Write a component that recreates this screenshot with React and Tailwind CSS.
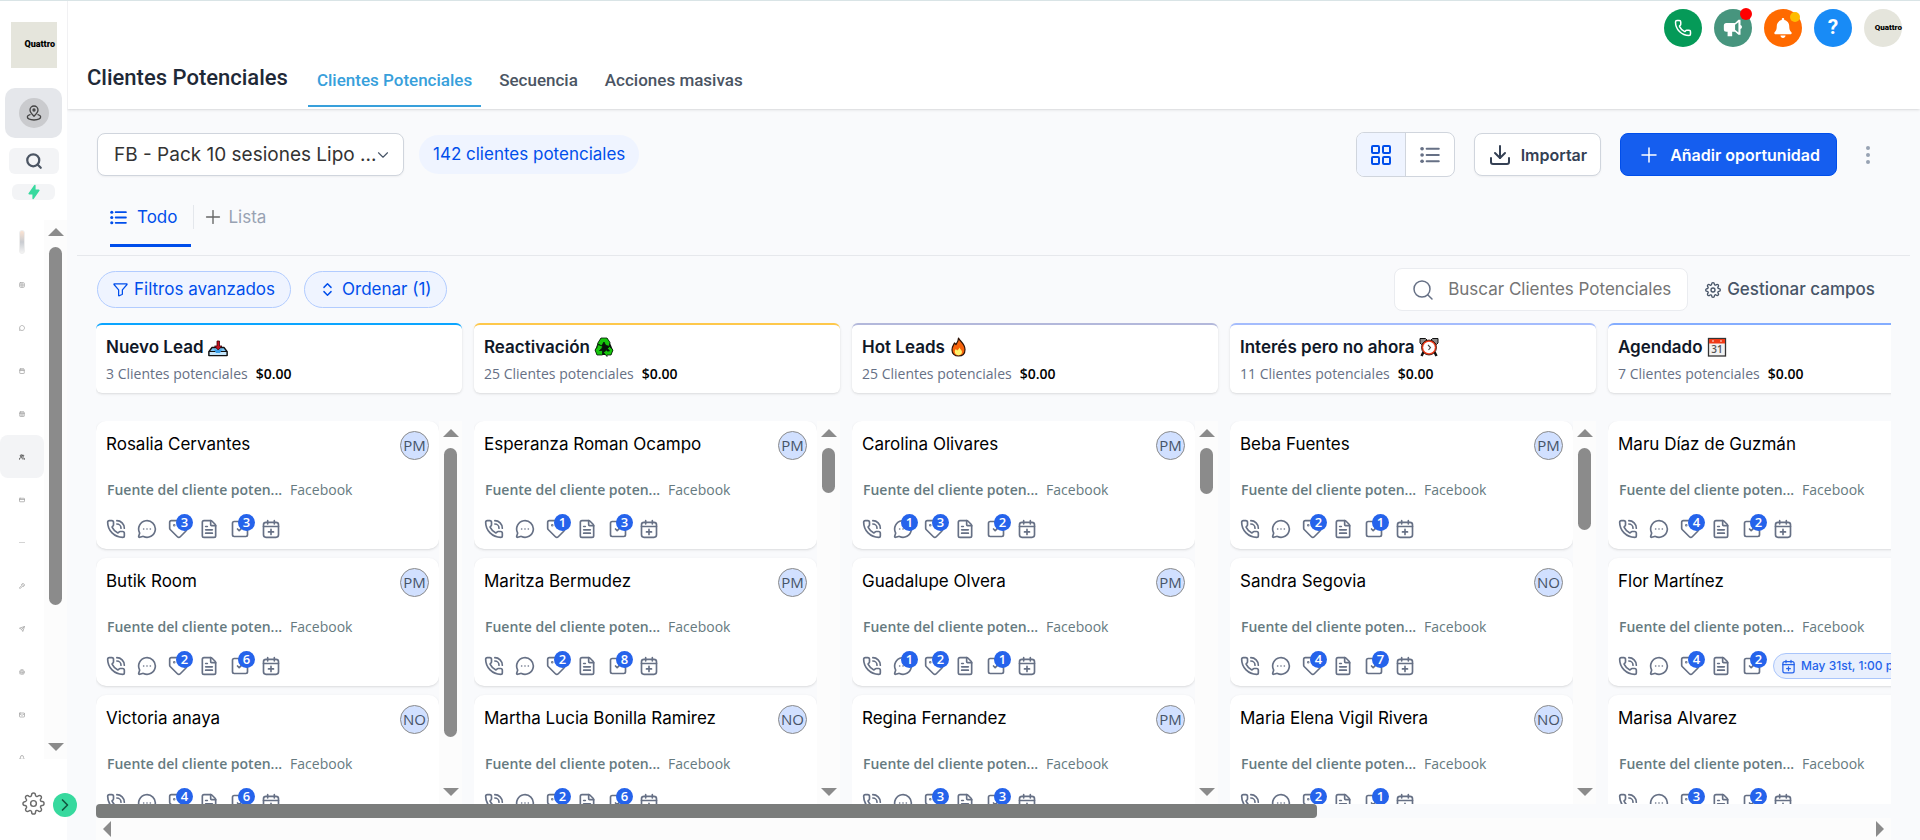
import React, { useState } from 'react'
import {
  Bell,
  Calendar,
  CalendarDays,
  ChevronDown,
  ChevronRight,
  ChevronsUpDown,
  CreditCard,
  Download,
  FileText,
  Fingerprint,
  Grid2x2,
  LayoutGrid,
  Mail,
  MessageCircle,
  MessageCircleMore,
  PhoneCall,
  Phone,
  Plus,
  Search,
  Send,
  SquareCheck,
  Tag,
  Users,
  Wrench,
} from 'lucide-react'
import { FiSettings } from 'react-icons/fi'
import { HiLightningBolt } from 'react-icons/hi'
import { FaBell } from 'react-icons/fa'

const columns = [
  {
    name: 'Nuevo Lead',
    emoji: 'inbox',
    count: 3,
    border: 'border-[#0ba5ff]',
    thumb: 'h-[289px]',
    cards: [
      { name: 'Rosalia Cervantes', owner: 'PM', tags: 3, tasks: 3 },
      { name: 'Butik Room', owner: 'PM', tags: 2, tasks: 6 },
      { name: 'Victoria anaya', owner: 'NO', tags: 4, tasks: 6 },
    ],
  },
  {
    name: 'Reactivación',
    emoji: 'recycle',
    count: 25,
    border: 'border-[#fec84b]',
    thumb: 'h-[45px]',
    cards: [
      { name: 'Esperanza Roman Ocampo', owner: 'PM', tags: 1, tasks: 3 },
      { name: 'Maritza Bermudez', owner: 'PM', tags: 2, tasks: 8 },
      { name: 'Martha Lucia Bonilla Ramirez', owner: 'NO', tags: 2, tasks: 6 },
    ],
  },
  {
    name: 'Hot Leads',
    emoji: 'fire',
    count: 25,
    border: 'border-[#b3b8db]',
    thumb: 'h-[46px]',
    cards: [
      { name: 'Carolina Olivares', owner: 'PM', chats: 1, tags: 3, tasks: 2 },
      { name: 'Guadalupe Olvera', owner: 'PM', chats: 1, tags: 2, tasks: 1 },
      { name: 'Regina Fernandez', owner: 'PM', tags: 3, tasks: 3 },
    ],
  },
  {
    name: 'Interés pero no ahora',
    emoji: 'clock',
    count: 11,
    border: 'border-[#a4bcfd]',
    thumb: 'h-[82px]',
    cards: [
      { name: 'Beba Fuentes', owner: 'PM', tags: 2, tasks: 1 },
      { name: 'Sandra Segovia', owner: 'NO', tags: 4, tasks: 7 },
      { name: 'Maria Elena Vigil Rivera', owner: 'NO', tags: 2, tasks: 1 },
    ],
  },
  {
    name: 'Agendado',
    emoji: 'calendar',
    count: 7,
    border: 'border-[#84adff]',
    thumb: 'h-[120px]',
    cards: [
      { name: 'Maru Díaz de Guzmán', tags: 4, tasks: 2 },
      { name: 'Flor Martínez', tags: 4, tasks: 2, date: 'May 31st, 1:00 pm' },
      { name: 'Marisa Alvarez', tags: 3, tasks: 2 },
    ],
  },
]

const menu = [
  { label: 'Panel', icon: Grid2x2 },
  { label: 'Conversaciones', icon: MessageCircle },
  { label: 'Calendarios', icon: Calendar },
  { label: 'Contactos', icon: CalendarDays },
  { label: 'Oportunidades', icon: Users, active: true },
  { label: 'Pagos', icon: CreditCard },
  { label: 'Separador', divider: true },
  { label: 'Automatización', icon: Wrench },
  { label: 'Marketing', icon: Send },
  { label: 'Sitios', icon: Fingerprint },
  { label: 'Membresías', icon: Mail },
  { label: 'Reputación', icon: Bell },
]

function CalendarPlusIcon({ className }) {
  return (
    <svg viewBox="0 0 24 24" className={className} fill="none" stroke="currentColor" strokeWidth="2" strokeLinecap="round" strokeLinejoin="round">
      <rect x="3" y="4" width="18" height="18" rx="3" />
      <path d="M3 9h18M8 2v4M16 2v4M12 12.500v6M9 15.500h6" />
    </svg>
  )
}

function FunnelIcon({ className }) {
  return (
    <svg viewBox="0 0 24 24" className={className} fill="none" stroke="currentColor" strokeWidth="2" strokeLinecap="round" strokeLinejoin="round">
      <path d="M2 3h20c.6 0 .7.5.4 1L15 12.500v6.500c0 .5-.2.800-.6 1L10 22c-.600.300-1 0-1-.600V12.500L1.600 4c-.3-.5-.2-1 .4-1Z" />
    </svg>
  )
}

function ListIcon({ className }) {
  return (
    <svg viewBox="0 0 24 24" className={className} fill="none" stroke="currentColor" strokeWidth="2.500" strokeLinecap="round">
      <path d="M8 4.500h14.500M8 12h14.500M8 19.500h14.500" />
      <g fill="currentColor" stroke="none">
        <circle cx="2.500" cy="4.500" r="2.200" />
        <circle cx="2.500" cy="12" r="2.200" />
        <circle cx="2.500" cy="19.500" r="2.200" />
      </g>
    </svg>
  )
}

function LocationIcon({ className }) {
  return (
    <svg viewBox="0 0 24 24" className={className} fill="none" stroke="currentColor" strokeWidth="2" strokeLinecap="round" strokeLinejoin="round">
      <path d="M12 17c3.500-3.500 6-6 6-9.500a6 6 0 0 0-12 0c0 3.500 2.500 6 6 9.500Z" />
      <circle cx="12" cy="7.500" r="1.500" />
      <path d="M6 14.500c-2.500.700-4 1.800-4 3.300C2 20.500 6 22.500 12 22.500s10-2 10-4.700c0-1.500-1.500-2.600-4-3.300" />
    </svg>
  )
}

function Emoji({ name }) {
  if (name === 'inbox') {
    return (
      <svg viewBox="0 0 20 20" className="h-5 w-5" role="img" aria-label="Bandeja">
        <path d="M4 10.500h12l3 4v4H1v-4z" fill="#7cc3f2" stroke="#111" strokeWidth="1.300" strokeLinejoin="round" />
        <path d="M1 14.500h18v4H1z" fill="#c3e5fb" stroke="#111" strokeWidth="1.200" strokeLinejoin="round" />
        <path d="M6 12.500h8l-2 3.500H8z" fill="#3b9fe8" />
        <path d="M9 4h2.500v5H14l-3.800 4L6.500 9H9z" fill="#c50f1f" stroke="#3c0508" strokeWidth=".8" />
      </svg>
    )
  }
  if (name === 'recycle') {
    return (
      <svg viewBox="0 0 20 20" className="h-5 w-5" role="img" aria-label="Reciclar">
        <path d="M7 1h6l3 5 3 7-2 5H3l-2-5 3-7z" fill="#07140a" />
        <g fill="#16c60c" stroke="#07140a" strokeWidth=".8" strokeLinejoin="round">
          <path d="M7 1h6l3 4.500-1 4-3.500-1.500-1.500-3L7.500 9 3.500 6.500z" />
          <path d="M3.500 7.500 8.500 9l-.5 2.500-2.500 2H8.500v4.500H3L1 13l2-2.500z" />
          <path d="m15.500 9.500 3.500 3.500-2 5H13v1.500L9.500 15.500l3.500-3V14h2.500l-2-2.500z" />
        </g>
      </svg>
    )
  }
  if (name === 'fire') {
    return (
      <svg viewBox="0 0 20 20" className="h-5 w-5" role="img" aria-label="Fuego">
        <path d="M9.500 1c1 3 6.500 5.500 6.500 11.500 0 4-2.500 6.500-6.500 6.500S3 16.500 3 13c0-3.500 1.500-5 2.500-7L7 7.500C8 6 9.500 4 9.500 1Z" fill="#f7630c" stroke="#2b1205" strokeWidth="1.200" strokeLinejoin="round" />
        <path d="M10.500 10.500c.5 2 2.500 2.500 2.500 4.500s-1.500 3.200-3.500 3.200S5.800 17 5.800 15c0-1.500.4-2 1-3L8.200 13.500c1-1 1.800-1.500 2.300-3Z" fill="#fff26b" />
      </svg>
    )
  }
  if (name === 'clock') {
    return (
      <svg viewBox="0 0 20 20" className="h-5 w-5" role="img" aria-label="Despertador">
        <path d="m4.500 15-2 4M15.500 15l2 4" stroke="#111" strokeWidth="2.500" />
        <path d="M1 6V1.500h5.500L8 3 2.500 7.500zM19 6V1.500h-5.500L12 3l5.500 4.500z" fill="#8c8c8c" stroke="#111" strokeWidth="1" />
        <circle cx="10" cy="10.500" r="7.500" fill="#f03a17" stroke="#2b0b05" strokeWidth=".8" />
        <circle cx="10" cy="10.500" r="5.800" fill="#fff" />
        <path d="m9 8 2.500 2.500L9.500 13" fill="none" stroke="#444" strokeWidth="1.100" />
      </svg>
    )
  }
  return (
    <svg viewBox="0 0 20 20" className="h-5 w-5" role="img" aria-label="Calendario">
      <rect x="1.500" y="1.500" width="17" height="17.500" fill="#f2f2f2" stroke="#333" strokeWidth="1.300" />
      <path d="M2 2h16v4.500H2z" fill="#f03a17" />
      <circle cx="6" cy="4" r=".8" fill="#fff" />
      <circle cx="14" cy="4" r=".8" fill="#fff" />
      <text x="10" y="16" textAnchor="middle" fontSize="10" fill="#555" fontFamily="Open Sans, sans-serif">31</text>
    </svg>
  )
}

function Arrow({ dir }) {
  const points = {
    up: '0,8 8,0 16,8',
    down: '0,0 16,0 8,8',
    left: '8,0 8,16 0,8',
    right: '0,0 8,8 0,16',
  }
  const upright = dir === 'up' || dir === 'down'
  return (
    <svg viewBox={upright ? '0 0 16 8' : '0 0 8 16'} className={upright ? 'h-2 w-4 shrink-0' : 'h-4 w-2 shrink-0'} fill="#8b8b8b">
      <polygon points={points[dir]} />
    </svg>
  )
}

function VerticalScroll({ thumb }) {
  return (
    <div className="flex w-[23px] shrink-0 flex-col items-center bg-[#fcfcfc] py-2">
      <Arrow dir="up" />
      <div className={'mt-[11px] w-[13px] rounded-full bg-[#8b8b8b] ' + thumb} />
      <div className="mt-auto flex">
        <Arrow dir="down" />
      </div>
    </div>
  )
}

function IconAction({ label, count, children }) {
  return (
    <button aria-label={label} className="relative h-5 w-5 shrink-0">
      {children}
      {count && (
        <span className="absolute -top-[5px] left-2 flex h-[17px] w-[17px] items-center justify-center rounded-full bg-[#2563eb] font-['Open_Sans',sans-serif] text-[13px] leading-[17px] font-semibold text-white">
          {count}
        </span>
      )}
    </button>
  )
}

function Card({ card }) {
  return (
    <article className="shrink-0 rounded-[10px] bg-white p-[10px] shadow-sm">
      <div className="flex h-[29px] items-start justify-between">
        <a href="#" className="text-[17px] leading-[27px] text-black">{card.name}</a>
        {card.owner && (
          <span className="flex h-[29px] w-[29px] items-center justify-center rounded-full border border-[#8b8b8b] bg-[#d1e0ff] font-['Open_Sans',sans-serif] text-[15px] text-[#475467]">
            {card.owner}
          </span>
        )}
      </div>
      <div className="mt-5 flex gap-2 px-px font-['Open_Sans',sans-serif] text-[14px] leading-5 text-[#667a80]">
        <span className="font-semibold">Fuente del cliente poten...</span>
        <span>Facebook</span>
      </div>
      <div className="mt-[19px] flex h-5 items-center gap-[11px] text-[#667085]">
        <IconAction label="Llamar"><PhoneCall className="h-5 w-5" /></IconAction>
        <IconAction label="Mensajes" count={card.chats}><MessageCircleMore className="h-5 w-5" /></IconAction>
        <IconAction label="Etiquetas" count={card.tags}><Tag className="h-5 w-5" /></IconAction>
        <IconAction label="Notas"><FileText className="h-5 w-5" /></IconAction>
        <IconAction label="Tareas" count={card.tasks}><SquareCheck className="h-5 w-5" /></IconAction>
        {card.date ? (
          <button className="flex h-[26px] shrink-0 items-center gap-[5px] rounded-full border border-[#a9c5fb] bg-[#e8effd] px-[7px] text-[12px] font-medium whitespace-nowrap text-[#2563eb]">
            <CalendarPlusIcon className="h-[15px] w-[15px]" />
            {card.date}
          </button>
        ) : (
          <IconAction label="Cita"><CalendarPlusIcon className="h-5 w-5" /></IconAction>
        )}
      </div>
    </article>
  )
}

function Column({ column }) {
  return (
    <section className="flex w-[366px] shrink-0 flex-col">
      <header className={'h-[70px] shrink-0 rounded-md border-t-2 bg-white px-[10px] pt-[10px] shadow-sm ' + column.border}>
        <h2 className="flex items-center gap-1 text-[17px] leading-6 font-semibold text-[#101828]">
          {column.name} <Emoji name={column.emoji} />
        </h2>
        <p className="mt-[5px] flex gap-2 font-['Open_Sans',sans-serif] text-[14px] leading-5 text-[#667085]">
          {column.count} Clientes potenciales
          <span className="font-semibold text-black">$0.00</span>
        </p>
      </header>
      <div className="mt-7 flex min-h-0 flex-1 overflow-hidden">
        <div className="flex flex-1 flex-col gap-[9px] overflow-hidden">
          {column.cards.map((card) => <Card key={card.name} card={card} />)}
        </div>
        <VerticalScroll thumb={column.thumb} />
      </div>
    </section>
  )
}

function Sidebar() {
  return (
    <aside className="relative z-10 flex w-[67px] shrink-0 flex-col bg-white">
      <div className="mt-[21px] ml-[11px] flex h-[46px] w-[46px] shrink-0 items-center justify-end bg-[#e5e5dc] pr-[2px] font-[Roboto,sans-serif] text-[9px] font-black text-black">
        Quattro
      </div>
      <button aria-label="Ubicación" className="mt-5 ml-[5px] flex h-[50px] w-[57px] shrink-0 items-center justify-center rounded-[10px] bg-[#e5e7eb]">
        <span className="flex h-[30px] w-[30px] items-center justify-center rounded-full bg-[#cacbce]">
          <LocationIcon className="h-4 w-4 text-[#444]" />
        </span>
      </button>
      <button aria-label="Buscar" className="mt-[10px] ml-[9px] flex h-[26px] w-[50px] shrink-0 items-center justify-center rounded-md bg-[#f3f4f6]">
        <Search strokeWidth={3} className="h-[18px] w-[18px] text-[#4b5563]" />
      </button>
      <button aria-label="Acciones rápidas" className="mt-[10px] ml-3 flex h-4 w-[43px] shrink-0 items-center justify-center rounded-md bg-[#f3f4f6]">
        <HiLightningBolt className="h-4 w-4 text-[#37d99e]" />
      </button>
      <div className="mt-5 flex min-h-0 flex-1">
        <nav className="flex w-[44px] flex-col overflow-hidden">
          <a href="#" aria-label="Inicio" className="flex h-[43px] shrink-0 items-center justify-center">
            <span className="h-6 w-[6px] rounded-full border border-[#eee] bg-linear-to-b from-[#fbe3d2] via-[#c9ccd1] to-[#f4f4f4]" />
          </a>
          {menu.map((item) => (
            <a
              key={item.label}
              href="#"
              aria-label={item.label}
              className={'flex h-[43px] shrink-0 items-center justify-center ' + (item.active ? 'rounded-lg bg-[#f3f4f6] text-[#333]' : 'text-[#a3a3a3]')}
            >
              {item.divider ? <span className="h-px w-[6px] bg-[#d4d4d4]" /> : <item.icon strokeWidth={3} className="h-[6px] w-[6px]" />}
            </a>
          ))}
        </nav>
        <VerticalScroll thumb="h-[358px]" />
      </div>
      <div className="flex h-[81px] shrink-0 items-center justify-center pt-[7px]">
        <button aria-label="Configuración"><FiSettings strokeWidth={1.5} className="h-[23px] w-[23px] text-[#6b6b6b]" /></button>
      </div>
      <button aria-label="Expandir" className="absolute -right-[10px] bottom-[23px] flex h-6 w-6 items-center justify-center rounded-full bg-[#37d99e]">
        <ChevronRight className="h-5 w-5 text-[#125740]" />
      </button>
    </aside>
  )
}

function TopBar({ tab, setTab }) {
  return (
    <header className="z-[5] flex h-[108px] shrink-0 flex-col border-l border-[#f1f1f3] bg-white shadow">
      <div className="flex justify-end gap-3 pt-2 pr-[18px] text-white">
        <button aria-label="Teléfono" className="flex h-[38px] w-[38px] items-center justify-center rounded-full bg-[#059a58]">
          <Phone strokeWidth={2} className="h-[18px] w-[18px]" />
        </button>
        <button aria-label="Novedades" className="relative flex h-[38px] w-[38px] items-center justify-center rounded-full bg-[#47957e]">
          <svg viewBox="0 0 24 24" className="h-5 w-5" fill="currentColor">
            <path fillRule="evenodd" d="M21 2v6.500a2.500 2.500 0 0 1 0 4.800V20h-2.500l-4-3.500H11V22H5.500v-5.500H4a3 3 0 0 1-3-3V9a3 3 0 0 1 3-3h10.500L18.500 2ZM18.500 5l-4 3v6.200l4 3.200Z" />
          </svg>
          <span className="absolute -top-px right-0 h-3 w-3 rounded-full bg-[#ff0000]" />
        </button>
        <button aria-label="Notificaciones" className="relative flex h-[38px] w-[38px] items-center justify-center rounded-full bg-[#ff6a00]">
          <FaBell className="h-5 w-5" />
          <span className="absolute top-[3px] right-[2px] h-[10px] w-[10px] rounded-full bg-[#ffbc00]" />
        </button>
        <button aria-label="Ayuda" className="flex h-[38px] w-[38px] items-center justify-center rounded-full bg-[#188bf6] font-[Roboto,sans-serif] text-[21px] font-bold">
          ?
        </button>
        <button aria-label="Perfil" className="flex h-[38px] w-[38px] items-center justify-end rounded-full bg-[#e5e5dc] font-[Roboto,sans-serif] text-[8px] font-black text-black">
          Quattro
        </button>
      </div>
      <div className="flex flex-1 items-end pl-[19px] font-[Roboto,sans-serif]">
        <h1 className="mb-[17px] text-[22px] leading-7 font-medium text-[#1f2937]">Clientes Potenciales</h1>
        <nav className="mb-[2px] ml-5 flex gap-[9px]">
          {['Clientes Potenciales', 'Secuencia', 'Acciones masivas'].map((name) => (
            <button
              key={name}
              onClick={() => setTab(name)}
              className={'border-b-2 px-[9px] pb-[13px] text-[17px] leading-6 font-medium ' + (tab === name ? 'border-[#38a0db] text-[#38a0db]' : 'border-transparent text-[#4b5563]')}
            >
              {name}
            </button>
          ))}
        </nav>
      </div>
    </header>
  )
}

function Toolbar() {
  return (
    <div className="mt-[23px] flex h-[45px] shrink-0 items-center pr-10 pl-[30px]">
      <div className="relative">
        <select aria-label="Embudo" className="h-[43px] w-[307px] appearance-none rounded-lg border border-[#d0d5dd] bg-white pt-px pl-4 text-[19px] text-[#333] shadow-xs">
          <option>FB - Pack 10 sesiones Lipo ...</option>
        </select>
        <ChevronDown strokeWidth={1.5} className="pointer-events-none absolute top-[13px] right-3 h-[18px] w-[18px] text-[#475467]" />
      </div>
      <span className="ml-[15px] rounded-full bg-[#eff4ff] px-[14px] py-2 text-[17px] leading-[23px] text-[#004eeb]">142 clientes potenciales</span>
      <div className="ml-auto flex items-center gap-[19px]">
        <div className="flex h-[45px] w-[99px] overflow-hidden rounded-lg border border-[#d0d5dd] bg-white">
          <button aria-label="Vista de tablero" className="flex flex-1 items-center justify-center border-r border-[#d0d5dd] bg-[#eff4ff] text-[#004eeb]">
            <LayoutGrid className="h-6 w-6" />
          </button>
          <button aria-label="Vista de lista" className="flex flex-1 items-center justify-center text-[#667085]">
            <ListIcon className="h-5 w-5" />
          </button>
        </div>
        <button className="flex h-[43px] items-center gap-[9px] rounded-lg border border-[#d0d5dd] bg-white px-[13px] text-[16px] font-semibold text-[#344054] shadow-xs">
          <Download className="h-6 w-6" />
          Importar
        </button>
        <button className="flex h-[43px] items-center gap-[9px] rounded-lg border border-[#004eeb] bg-[#155eef] px-4 text-[16px] font-semibold text-white">
          <Plus strokeWidth={1.500} className="h-6 w-6" />
          Añadir oportunidad
        </button>
        <button aria-label="Más opciones" className="flex h-6 w-6 flex-col items-center justify-center gap-[3px]">
          <span className="h-1 w-1 rounded-full bg-[#98a2b3]" />
          <span className="h-1 w-1 rounded-full bg-[#98a2b3]" />
          <span className="h-1 w-1 rounded-full bg-[#98a2b3]" />
        </button>
      </div>
    </div>
  )
}

function Filters() {
  return (
    <div className="mt-3 flex h-[43px] shrink-0 items-center gap-[13px] pr-[45px] pl-[30px] text-[17px]">
      <button className="flex h-[37px] items-center gap-[6px] rounded-full border border-[#b2ccff] bg-[#eff4ff] px-[15px] text-[#004eeb]">
        <FunnelIcon className="h-[15px] w-[15px]" />
        Filtros avanzados
      </button>
      <button className="flex h-[37px] items-center gap-[6px] rounded-full border border-[#b2ccff] bg-[#eff4ff] px-[14px] text-[#004eeb]">
        <ChevronsUpDown className="h-[17px] w-[17px]" />
        Ordenar (1)
      </button>
      <label className="ml-auto flex h-[43px] w-[294px] items-center rounded-lg border border-[#eaecf0] bg-white pl-4">
        <Search strokeWidth={1.500} className="h-6 w-6 shrink-0 text-[#667085]" />
        <input type="text" aria-label="Buscar Clientes Potenciales" placeholder="Buscar Clientes Potenciales" className="ml-[13px] w-full bg-transparent outline-none placeholder:text-[#757575]" />
      </label>
      <button className="ml-1 flex items-center gap-[6px] font-medium text-[#475467]">
        <FiSettings className="h-4 w-4" />
        Gestionar campos
      </button>
    </div>
  )
}

export default function App() {
  const [tab, setTab] = useState('Clientes Potenciales')

  return (
    <div className="flex h-screen overflow-hidden border-t border-[#d9e4e6] bg-[#f9fafc] font-[Inter,sans-serif]">
      <Sidebar />
      <main className="flex min-w-0 flex-1 flex-col">
        <TopBar tab={tab} setTab={setTab} />
        <Toolbar />
        <div className="mx-[10px] mt-6 flex shrink-0 border-b border-[#e6e8ec] pb-2 pl-[33px] text-[17px] leading-6">
          <button className="flex items-center gap-[10px] border-b-[3px] border-[#004eeb] pt-1 pr-[14px] pb-[15px] text-[#004eeb]">
            <ListIcon className="h-[17px] w-[17px]" />
            Todo
          </button>
          <button className="mt-1 mb-[18px] ml-[2px] flex items-center gap-1 border-l border-[#e4e7ec] pl-2 text-[#98a2b3]">
            <Plus strokeWidth={1.500} className="h-[22px] w-[22px] text-[#666]" />
            Lista
          </button>
        </div>
        <Filters />
        <div className="mt-3 mr-[29px] ml-[29px] flex min-h-0 flex-1 flex-col">
          <div className="flex min-h-0 flex-1 gap-3 overflow-hidden">
            {columns.map((column) => <Column key={column.name} column={column} />)}
          </div>
          <div className="h-9 shrink-0">
            <div className="h-[14px] w-[68%] rounded-[4px] bg-[#7b7d7c]" />
            <div className="flex h-[22px] items-center justify-between bg-[#fcfcfc] px-[7px]">
              <Arrow dir="left" />
              <Arrow dir="right" />
            </div>
          </div>
        </div>
      </main>
    </div>
  )
}
